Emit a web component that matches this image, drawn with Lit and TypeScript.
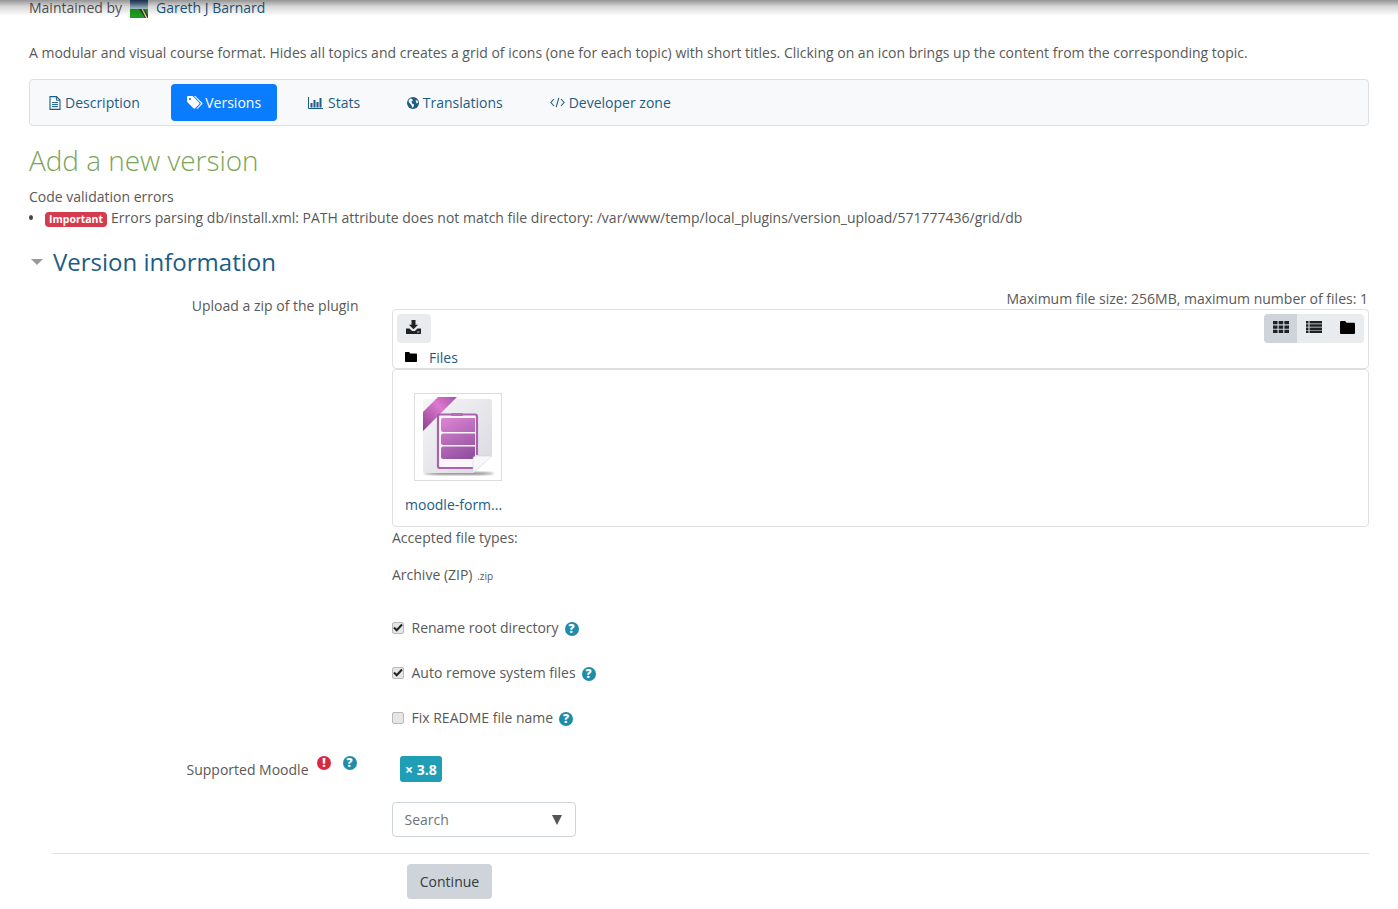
import { LitElement, html, css, svg } from "lit";
import { customElement } from "lit/decorators.js";

const ic = (w: number, h: number, body: unknown, vb = `0 0 ${w} ${h}`) =>
  html`<svg class="ic" width=${w} height=${h} viewBox=${vb}>${body}</svg>`;

const fileIcon = ic(12, 14, svg`<path d="M1 .6h6.600L11 4v9.400H1z" fill="none" stroke="currentColor" stroke-width="1.100"/><path d="M7.400.8V4.200H11M3 6.600h6M3 8.600h6M3 10.600h6" fill="none" stroke="currentColor" stroke-width="1"/>`);
const tagsIcon = ic(16, 13, svg`<path d="M0 1.200C0 .5.500 0 1.200 0h4.300l6.600 6.600c.5.500.5 1.200 0 1.700l-4 4c-.5.500-1.200.5-1.700 0L0 5.700zM3 2a1.100 1.100 0 1 0 0 2.200A1.100 1.100 0 0 0 3 2z" fill="currentColor" fill-rule="evenodd"/><path d="M7 0h1.300l6.800 6.700c.5.500.5 1.100 0 1.600l-4.200 4.200c-.5.500-1 .4-1.400 0l4-4.200c.5-.5.500-1.100 0-1.600z" fill="currentColor"/>`);
const barsIcon = ic(15, 12, svg`<path d="M.5 0v11.500H15" fill="none" stroke="currentColor"/><path d="M2.500 6h2v4.500h-2zM5.500 3h2v7.500h-2zM8.500 5h2v5.500h-2zM11.500 1h2v9.500h-2z" fill="currentColor"/>`);
const globeIcon = ic(12, 12, svg`<circle cx="6" cy="6" r="6" fill="currentColor"/><path d="M3 1.600l2.200.3.600 1.600-1.300 1.200.6 1.800 2 .9-.6 2.700-1.200.6-1-2.800L2.500 6 1.400 4zM8.500 3.500l2-.3.600 2.600-1.500.6z" fill="#f8f9fa"/>`);
const codeIcon = ic(15, 11, svg`<path d="M4 2 .9 5.500 4 9M11 2l3.100 3.500L11 9M8.800.8 6.200 10.200" fill="none" stroke="currentColor" stroke-width="1.100"/>`);
const dlIcon = ic(15, 14, svg`<path d="M5.500 0h4v4.700h2.600L7.500 9.300 2.900 4.700h2.600z" fill="#222"/><path d="M0 8.500h3.500l2.600 2.500h2.800l2.600-2.500H15V14H0z" fill="#222"/><path d="M11 11.600h2.500v.8H11z" fill="#eee"/>`);
const gridIcon = ic(16, 12, svg`<path d="M0 0h4.500v3.300H0zM5.700 0h4.500v3.300H5.700zM11.400 0H16v3.300h-4.600zM0 4.400h4.500v3.300H0zM5.700 4.400h4.500v3.300H5.700zM11.400 4.400H16v3.300h-4.600zM0 8.800h4.500V12H0zM5.700 8.800h4.500V12H5.700zM11.400 8.800H16V12h-4.600z" fill="#1d2125"/>`);
const listIcon = ic(16, 12, svg`<path d="M0 0h2.500v2.500H0zM0 3.200h2.500v2.500H0zM0 6.400h2.500v2.500H0zM0 9.500h2.500V12H0zM3.500 0H16v2.500H3.500zM3.500 3.200H16v2.500H3.500zM3.500 6.400H16v2.500H3.500zM3.500 9.500H16V12H3.500z" fill="#1d2125"/>`);
const folderIcon = html`<svg class="ic" width="15" height="13" viewBox="0 0 15 12" preserveAspectRatio="none"><path d="M1.200 0h4l1.300 1.700h7.300c.7 0 1.200.5 1.200 1.200v7.900c0 .7-.5 1.200-1.200 1.200H1.200C.5 12 0 11.500 0 10.800V1.200C0 .5.500 0 1.200 0z" fill="#000"/></svg>`;
const helpIcon = html`<span class="round help">?</span>`;
const errIcon = html`<span class="round err">!</span>`;
const tick = ic(10, 9, svg`<path d="M1 4.500l2.700 2.700L9 1.500" fill="none" stroke="#222" stroke-width="2"/>`);

const avatar = html`<svg class="avatar" width="18" height="18" viewBox="0 0 18 18"><defs><linearGradient id="sky" x1="0" y1="0" x2="0" y2="1"><stop offset="0" stop-color="#2c4f7f"/><stop offset="1" stop-color="#bcd4dc"/></linearGradient></defs><rect width="18" height="9" fill="url(#sky)"/><rect y="9" width="18" height="9" fill="#1f9c1e"/><path d="M9 9h5l4 6v3h-3z" fill="#2d3a45"/><path d="M13 9l4.500 9H16L11.500 9z" fill="#e3d75c"/></svg>`;

const archive = html`<svg width="80" height="80" viewBox="0 0 80 80"><defs>
  <linearGradient id="pg" x1="0" y1="0" x2="1" y2="1"><stop offset="0" stop-color="#f6f6f8"/><stop offset="1" stop-color="#d8d8df"/></linearGradient>
  <linearGradient id="bar" gradientUnits="userSpaceOnUse" x1="30" y1="21" x2="50" y2="62"><stop offset="0" stop-color="#d882cf"/><stop offset="1" stop-color="#8f509f"/></linearGradient>
  <linearGradient id="rib" x1="0" y1="1" x2="1" y2="0"><stop offset="0" stop-color="#8c3f8c"/><stop offset=".6" stop-color="#dc78d0"/><stop offset="1" stop-color="#a653a5"/></linearGradient>
  <filter id="bl"><feGaussianBlur stdDeviation="1"/></filter></defs>
  <ellipse cx="41" cy="76.500" rx="35" ry="1.300" fill="#777" filter="url(#bl)"/>
  <path d="M7 2h65c1.300 0 2 .7 2 2v54L55 76H7c-1.300 0-2-.7-2-2V4c0-1.300.7-2 2-2z" fill="url(#pg)"/>
  <path d="M5 15 20 0h19L5 34z" fill="url(#rib)"/>
  <path d="M55 71H22a2 2 0 0 1-2-2V19.500a2 2 0 0 1 2-2h35a2 2 0 0 1 2 2V58" fill="#fbf6fb" stroke="#a963ad" stroke-width="2.200"/>
  <rect x="33" y="16" width="12" height="3" rx="1" fill="#b56db6"/>
  <path d="M25 21h32v14H25a2 2 0 0 1-2-2V23a2 2 0 0 1 2-2z" fill="url(#bar)"/>
  <path d="M25 36.500h32V48H25a2 2 0 0 1-2-2v-7.500a2 2 0 0 1 2-2z" fill="url(#bar)"/>
  <path d="M25 49.500h32V62H25a2 2 0 0 1-2-2v-8.500a2 2 0 0 1 2-2z" fill="url(#bar)"/>
  <path d="M55 76V62c0-2 1-3 3-3h16z" fill="#f8f8f8" stroke="#cfcfd4" stroke-width=".5"/>
</svg>`;

@customElement("app-root")
export class AppRoot extends LitElement {
  static styles = css`
    :host {
      display: block; position: relative; height: 909px; overflow: hidden; box-sizing: border-box;
      padding: 0 29px; background: #fff; color: #595959;
      font: 14px/21px "Open Sans", sans-serif;
    }
    * { box-sizing: border-box; }
    a { color: #1d5c85; text-decoration: none; }
    .ic { display: inline-block; flex: none; }
    .shade { position: absolute; left: 0; right: 0; top: 0; height: 16px; background: linear-gradient(rgba(0,0,0,.42), rgba(0,0,0,.16) 40%, rgba(0,0,0,0)); pointer-events: none; }
    .maint { display: flex; align-items: center; height: 16px; margin-top: -1px; }
    .avatar { margin: 4px 8px 0 8px; }
    .intro { margin: 27px 0 0; height: 21px; white-space: nowrap; }
    .tabs { display: flex; align-items: center; height: 47px; margin-top: 16px; padding: 0 3px; background: #f8f9fa; border: 1px solid #dfdfdf; border-radius: 4px; }
    .tab { display: flex; align-items: center; gap: 4px; height: 37px; padding: 0 16px; border-radius: 4px; color: #1d5c85; margin-right: 15px; }
    .tab.active { background: #0a7cff; color: #fff; gap: 2.500px; padding-right: 15.500px; }
    .tab.stats { gap: 5px; padding-left: 16.500px; padding-right: 15.500px; }
    h2.page { margin: 16px 0 0; height: 36px; font: 300 27.900px/36px "Open Sans", sans-serif; color: #7aa45a; }
    .errs { margin-top: 8px; height: 21px; }
    .errline { display: flex; align-items: center; height: 21px; white-space: nowrap; }
    .dot { width: 4px; height: 5px; border-radius: 50%; background: #444; margin-right: 12px; flex: none; }
    .badge { display: inline-block; height: 15px; padding: 0 4px; margin: 4px 4px 0 0; background: #d63a4d; color: #fff; border-radius: 4px; font: 700 10.500px/15px "Open Sans", sans-serif; }
    .section { display: flex; align-items: center; height: 33px; margin-top: 17px; }
    .section i { display: block; width: 0; height: 0; margin: 0 10px 0 2px; border-left: 6px solid transparent; border-right: 6px solid transparent; border-top: 6px solid #999; }
    .section h3 { margin: 0; font: 400 24px/33px "Open Sans", sans-serif; color: #1d5c85; }
    .row { display: grid; grid-template-columns: 329.500px 1fr; column-gap: 33.500px; }
    .lab { text-align: right; }
    .upload { margin-top: 11px; }
    .uplab { padding-top: 6px; }
    .max { text-align: right; height: 21px; padding-right: 1px; margin-top: -1px; line-height: 21px; }
    .bar { position: relative; height: 60px; border: 1px solid #dfdfdf; border-radius: 4px; }
    .dlbtn { position: absolute; left: 4px; top: 4px; width: 34px; height: 29px; padding: 0 1px 4px 0; display: flex; align-items: center; justify-content: center; background: #e9ecef; border-radius: 4px; }
    .crumb { position: absolute; left: 12px; top: 37px; display: flex; align-items: center; height: 21px; }
    .crumb svg { margin-right: 12px; margin-top: -2px; width: 12px; height: 10px; }
    .views { position: absolute; right: 4px; top: 4px; display: flex; border-radius: 4px; overflow: hidden; background: #e9ecef; }
    .views span { display: flex; align-items: center; justify-content: center; width: 33.340px; height: 29px; padding-bottom: 3px; }
    .views span.on { background: #ced4da; }
    .files { display: flex; flex-direction: column; align-items: flex-start; height: 158px; border: 1px solid #dfdfdf; border-radius: 4px; padding: 23px 0 0 12px; }
    .thumb { width: 88px; height: 88px; margin-left: 9px; padding: 3px; border: 1px solid #dcdcdc; display: block; }
    .fname { margin-top: 13px; color: #1d5c85; }
    .acc { height: 21px; }
    .arch { margin-top: 16px; height: 21px; }
    .arch small { font-size: 10px; margin-left: 1px; }
    .chk { display: flex; align-items: center; height: 21px; margin-top: 24px; }
    .chks { margin-top: 32px; }
    .chks .chk:first-child { margin-top: 0; }
    .box { width: 12px; height: 12px; margin-right: 7.500px; border: 1px solid #b8b8b8; border-radius: 2px; background: #e6e6e6; display: flex; align-items: center; justify-content: center; flex: none; }
    .round { display: inline-flex; align-items: center; justify-content: center; flex: none; width: 14px; height: 14px; border-radius: 50%; color: #fff; font: 800 12px/14px "Open Sans", sans-serif; }
    .help { background: #1f8ca8; margin: 2px 0 0 6px; }
    .err { background: #d9283e; }
    .moodle { margin-top: 27px; }
    .mlab { display: flex; justify-content: flex-end; align-items: flex-start; padding-right: 2px; }
    .mlab .t { margin: 4px 8.500px 0 0; }
    .mlab .round { margin-top: 1px; }
    .mlab .help { margin-left: 11.500px; }
    .ms { padding: 1px 0 0 8px; }
    .tag { display: inline-block; height: 26px; padding: 0 5px; border-radius: 3px; background: #1f9eb5; color: #fff; font: 700 14px/27px "Open Sans", sans-serif; }
    .select { display: flex; align-items: center; justify-content: space-between; width: 184px; height: 35px; margin: 20px 0 0 -8px; padding: 0 13px 0 11.500px; border: 1px solid #ced4da; border-radius: 4px; color: #6c757d; }
    .select b { width: 0; height: 0; border-left: 5px solid transparent; border-right: 5px solid transparent; border-top: 10px solid #555; }
    hr { margin: 16px 0 0 24px; border: 0; border-top: 1px solid #dfdfdf; }
    .actions { padding: 10px 0 0 378px; }
    .btn { display: inline-flex; align-items: center; justify-content: center; width: 85px; height: 35px; background: #ced4da; color: #343a40; border-radius: 4px; }
  `;

  render() {
    return html`
      <div class="maint"><span>Maintained by</span>${avatar}<a href="#">Gareth J Barnard</a></div>
      <p class="intro">A modular and visual course format. Hides all topics and creates a grid of icons (one for each topic) with short titles. Clicking on an icon brings up the content from the corresponding topic.</p>
      <nav class="tabs">
        <a class="tab" href="#">${fileIcon}Description</a>
        <a class="tab active" href="#">${tagsIcon}Versions</a>
        <a class="tab stats" href="#">${barsIcon}Stats</a>
        <a class="tab" href="#">${globeIcon}Translations</a>
        <a class="tab" href="#">${codeIcon}Developer zone</a>
      </nav>
      <h2 class="page">Add a new version</h2>
      <div class="errs">Code validation errors</div>
      <div class="errline"><span class="dot"></span><span class="badge">Important</span><span>Errors parsing db/install.xml: PATH attribute does not match file directory: /var/www/temp/local_plugins/version_upload/571777436/grid/db</span></div>
      <div class="section"><i></i><h3>Version information</h3></div>

      <div class="row upload">
        <div class="lab uplab">Upload a zip of the plugin</div>
        <div>
          <div class="max">Maximum file size: 256MB, maximum number of files: 1</div>
          <div class="bar">
            <span class="dlbtn">${dlIcon}</span>
            <div class="crumb">${folderIcon}<a href="#">Files</a></div>
            <div class="views"><span class="on">${gridIcon}</span><span>${listIcon}</span><span>${folderIcon}</span></div>
          </div>
          <div class="files">
            <span class="thumb">${archive}</span>
            <a class="fname" href="#">moodle-form...</a>
          </div>
          <div class="acc">Accepted file types:</div>
          <div class="arch">Archive (ZIP) <small>.zip</small></div>
          <div class="chks">
            <div class="chk"><span class="box">${tick}</span>Rename root directory${helpIcon}</div>
            <div class="chk"><span class="box">${tick}</span>Auto remove system files${helpIcon}</div>
            <div class="chk"><span class="box"></span>Fix README file name${helpIcon}</div>
          </div>
        </div>
      </div>

      <div class="row moodle">
        <div class="mlab"><span class="t">Supported Moodle</span>${errIcon}${helpIcon}</div>
        <div class="ms">
          <span class="tag">× 3.8</span>
          <div class="select"><span>Search</span><b></b></div>
        </div>
      </div>
      <hr />
      <div class="actions"><span class="btn">Continue</span></div>
      <div class="shade"></div>
    `;
  }
}
